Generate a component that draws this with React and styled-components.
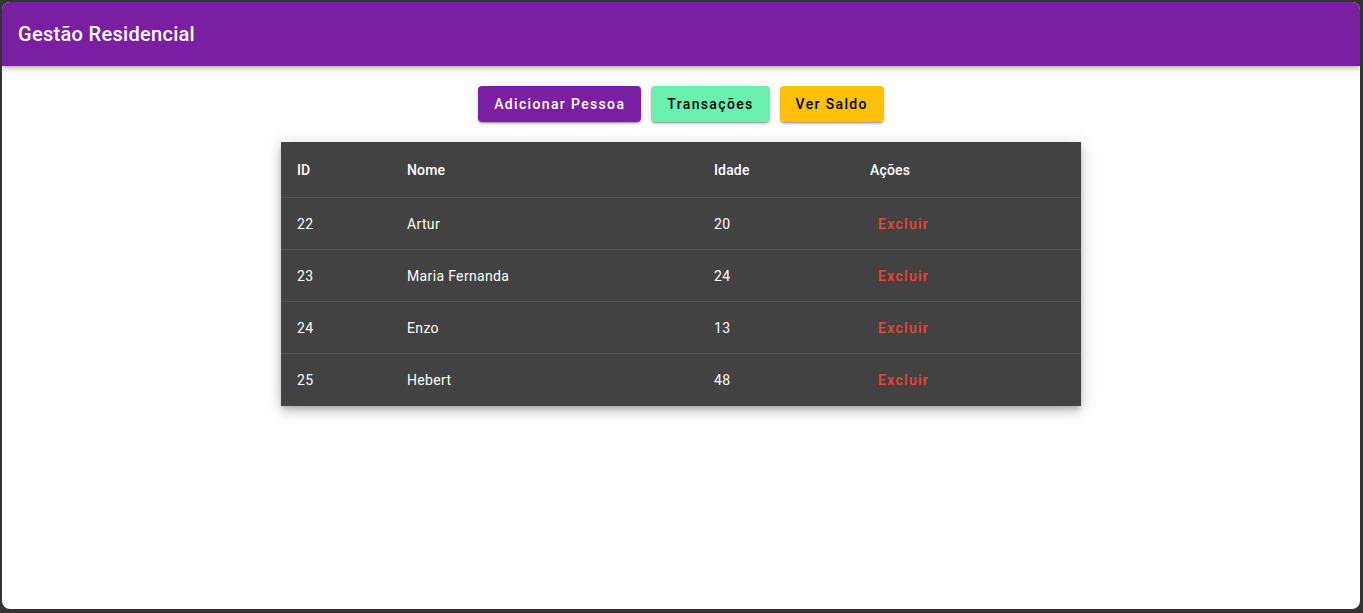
import React from 'react';
import styled, { createGlobalStyle } from 'styled-components';

const GlobalStyle = createGlobalStyle`
    html, body {
        margin: 0;
        padding: 0;
        background: #333333;
        font-family: Roboto, "Liberation Sans", Arial, sans-serif;
    }
`;

const Frame = styled.div`
    padding: 2px 3px 4px 2px;
    height: 613px;
    box-sizing: border-box;
`;

const Window = styled.div`
    height: 100%;
    background: #ffffff;
    border-radius: 8px;
    overflow: hidden;
    display: flex;
    flex-direction: column;
`;

const AppBar = styled.header`
    height: 64px;
    flex-shrink: 0;
    background: #7b1fa2;
    color: #ffffff;
    display: flex;
    align-items: center;
    padding: 0 16px;
    box-sizing: border-box;
    box-shadow: 0 2px 4px -1px rgba(0,0,0,0.2), 0 4px 5px 0 rgba(0,0,0,0.14);

    > h1 {
        margin: 0;
        font-size: 20px;
        font-weight: 500;
        letter-spacing: 0.3px;
    }
`;

const Content = styled.main`
    display: flex;
    flex-direction: column;
    align-items: center;
    padding-top: 20px;
    gap: 20px;
`;

const Toolbar = styled.div`
    display: flex;
    gap: 10px;
`;

const ActionButton = styled.button`
    height: 36px;
    padding: 6px 16px;
    border: none;
    border-radius: 4px;
    font-family: inherit;
    font-size: 14px;
    font-weight: 500;
    letter-spacing: 1.35px;
    background: ${p => p.bg};
    color: ${p => p.fg};
    box-shadow: 0 3px 1px -2px rgba(0,0,0,0.2), 0 2px 2px 0 rgba(0,0,0,0.14), 0 1px 5px 0 rgba(0,0,0,0.12);
    cursor: pointer;
`;

const TablePaper = styled.div`
    width: 800px;
    background: #424242;
    color: #ffffff;
    box-shadow: 0 3px 5px -1px rgba(0,0,0,0.2), 0 6px 10px 0 rgba(0,0,0,0.14), 0 1px 18px 0 rgba(0,0,0,0.12);
`;

const Table = styled.table`
    width: 100%;
    border-collapse: collapse;
    table-layout: fixed;
    font-size: 14px;

    th, td {
        text-align: left;
        padding: 0 16px;
        border-bottom: 1px solid #515151;
    }

    th {
        height: 55px;
        font-weight: 500;
        letter-spacing: 0.15px;
    }

    td {
        height: 51px;
        font-weight: 400;
        letter-spacing: 0.35px;
    }

    tbody tr:last-child td {
        border-bottom: none;
        height: 52px;
    }
`;

const DeleteButton = styled.button`
    background: none;
    border: none;
    padding: 6px 8px;
    min-width: 64px;
    font-family: inherit;
    font-size: 14px;
    font-weight: 500;
    letter-spacing: 1.3px;
    color: #f44336;
    text-align: left;
    cursor: pointer;
`;

const people = [
    { id: 22, nome: 'Artur', idade: 20 },
    { id: 23, nome: 'Maria Fernanda', idade: 24 },
    { id: 24, nome: 'Enzo', idade: 13 },
    { id: 25, nome: 'Hebert', idade: 48 },
];

const App = () => {
    return (
        <>
            <GlobalStyle />
            <Frame>
                <Window>
                    <AppBar>
                        <h1>Gestão Residencial</h1>
                    </AppBar>
                    <Content>
                        <Toolbar>
                            <ActionButton bg="#7b1fa2" fg="#ffffff">Adicionar Pessoa</ActionButton>
                            <ActionButton bg="#69f0ae" fg="#000000">Transações</ActionButton>
                            <ActionButton bg="#ffc107" fg="#000000">Ver Saldo</ActionButton>
                        </Toolbar>
                        <TablePaper>
                            <Table>
                                <colgroup>
                                    <col style={{ width: 110 }} />
                                    <col style={{ width: 307 }} />
                                    <col style={{ width: 156 }} />
                                    <col />
                                </colgroup>
                                <thead>
                                    <tr>
                                        <th>ID</th>
                                        <th>Nome</th>
                                        <th>Idade</th>
                                        <th>Ações</th>
                                    </tr>
                                </thead>
                                <tbody>
                                    {people.map(p => (
                                        <tr key={p.id}>
                                            <td>{p.id}</td>
                                            <td>{p.nome}</td>
                                            <td>{p.idade}</td>
                                            <td><DeleteButton>Excluir</DeleteButton></td>
                                        </tr>
                                    ))}
                                </tbody>
                            </Table>
                        </TablePaper>
                    </Content>
                </Window>
            </Frame>
        </>
    );
};

export default App;
